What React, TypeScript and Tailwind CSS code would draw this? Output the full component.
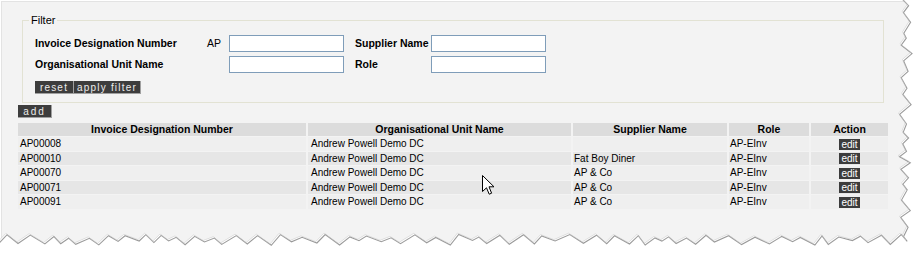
import { FC } from "react";

type Row = { id: string; unit: string; supplier: string; role: string };

const rows: Row[] = [
    { id: "AP00008", unit: "Andrew Powell Demo DC", supplier: "", role: "AP-EInv" },
    { id: "AP00010", unit: "Andrew Powell Demo DC", supplier: "Fat Boy Diner", role: "AP-EInv" },
    { id: "AP00070", unit: "Andrew Powell Demo DC", supplier: "AP & Co", role: "AP-EInv" },
    { id: "AP00071", unit: "Andrew Powell Demo DC", supplier: "AP & Co", role: "AP-EInv" },
    { id: "AP00091", unit: "Andrew Powell Demo DC", supplier: "AP & Co", role: "AP-EInv" },
];

// seeded random so the torn paper edge is the same on every render
const rand = (() => {
    let s = 1234567;
    return () => {
        s = (s * 16807) % 2147483647;
        return s / 2147483647;
    };
})();

const tornEdge = (() => {
    const pts: [number, number][] = [];
    let y = -2;
    let i = 0;
    while (y < 236) {
        const x = i % 2 === 0 ? 898 + rand() * 5 : 905 + rand() * 6;
        pts.push([x, y]);
        y += 5 + rand() * 6;
        i++;
    }
    pts.push([906, 240]);
    let x = 900;
    i = 0;
    while (x > -4) {
        const yy = i % 2 === 0 ? 233 + rand() * 4 : 239 + rand() * 5;
        pts.push([x, yy]);
        x -= 6 + rand() * 9;
        i++;
    }
    pts.push([-4, 238]);
    return pts;
})();

const edgeLine = tornEdge.map(([x, y]) => `${x.toFixed(1)},${y.toFixed(1)}`).join(" ");
const outside = `M921,-2 L${edgeLine} L-4,263 L921,263 Z`;

const DarkButton: FC<{ label: string; width: string }> = ({ label, width }) => (
    <span className={`${width} h-[13px] leading-[13px] inline-block text-center bg-[#3d3d3d] text-[#ececec] text-[10px] tracking-[1.2px] border-r border-b border-[#a0a0a0]`}>
        {label}
    </span>
);

const Field: FC = () => <div className="w-[115px] h-[17px] border border-[#7f9db9] bg-white" />;

const Cursor: FC = () => (
    <svg className="absolute left-[482px] top-[175px]" width="14" height="22" viewBox="0 0 14 22">
        <path d="M0.5 0.5 V16.5 L4.5 12.8 L7.2 19.2 L9.6 18.2 L7 11.8 H12 Z" fill="#fff" stroke="#000" strokeWidth="1" strokeLinejoin="miter" />
    </svg>
);

export default function App() {
    return (
        <div className="relative w-[921px] h-[263px] bg-white overflow-hidden text-black" style={{ fontFamily: '"Liberation Sans", Arial, sans-serif' }}>
            <div className="mt-[1px] ml-[1px] w-[912px] h-[252px] bg-[#f3f3f3] border-t border-l border-[#e3e3e3]">
                <div className="h-[231px] border-b border-[#e0e0e0]">
                    <fieldset className="ml-[20px] mt-[12px] w-[862px] border border-[#e2e2d3] pb-[8px]">
                        <legend className="ml-[6px] px-[2px] text-[11px] leading-[13px]">Filter</legend>
                        <div className="pl-[12px] pt-[8px] flex flex-col gap-[4px]">
                            <div className="flex items-center h-[17px]">
                                <span className="w-[172px] text-[10.5px] font-bold">Invoice Designation Number</span>
                                <span className="w-[22px] text-[10.5px]">AP</span>
                                <Field />
                                <span className="ml-[11px] w-[76px] text-[10.5px] font-bold">Supplier Name</span>
                                <Field />
                            </div>
                            <div className="flex items-center h-[17px]">
                                <span className="w-[172px] text-[10.5px] font-bold">Organisational Unit Name</span>
                                <span className="w-[22px]" />
                                <Field />
                                <span className="ml-[11px] w-[76px] text-[10.5px] font-bold">Role</span>
                                <Field />
                            </div>
                            <div className="flex mt-[4px]">
                                <DarkButton label="reset" width="w-[39px]" />
                                <DarkButton label="apply filter" width="w-[67px]" />
                            </div>
                        </div>
                    </fieldset>

                    <div className="ml-[16px] mt-[2px] flex">
                        <span className="w-[34px] h-[13px] leading-[13px] inline-block text-center bg-[#3d3d3d] text-[#ececec] text-[10px] tracking-[2px] border-r border-b border-[#a0a0a0]">
                            add
                        </span>
                    </div>

                    <table className="ml-[14px] mt-[4px] w-[874px] table-fixed border-separate border-spacing-x-[2px] border-spacing-y-[1px] text-[10px]">
                        <colgroup>
                            <col className="w-[288px]" />
                            <col className="w-[263px]" />
                            <col className="w-[154px]" />
                            <col className="w-[80px]" />
                            <col className="w-[77px]" />
                        </colgroup>
                        <thead>
                            <tr className="h-[13px] bg-[#dcdcdc] text-[10.5px] font-bold">
                                <th className="p-0 leading-[13px]">Invoice Designation Number</th>
                                <th className="p-0 leading-[13px]">Organisational Unit Name</th>
                                <th className="p-0 leading-[13px]">Supplier Name</th>
                                <th className="p-0 leading-[13px]">Role</th>
                                <th className="p-0 leading-[13px]">Action</th>
                            </tr>
                        </thead>
                        <tbody>
                            {rows.map((r, i) => (
                                <tr key={r.id} className={`h-[13.5px] ${i % 2 === 0 ? "bg-[#efefef]" : "bg-[#e6e6e6]"}`}>
                                    <td className="p-0 pl-[2px] leading-[13px]">{r.id}</td>
                                    <td className="p-0 pl-[3px] leading-[13px]">{r.unit}</td>
                                    <td className="p-0 pl-[1px] leading-[13px]">{r.supplier}</td>
                                    <td className="p-0 pl-[1px] leading-[13px]">{r.role}</td>
                                    <td className="p-0 text-center leading-[11px]">
                                        <span className="inline-block w-[21px] h-[11px] bg-[#3c3c3c] text-white text-[10px] leading-[11px] align-middle">edit</span>
                                    </td>
                                </tr>
                            ))}
                        </tbody>
                    </table>
                </div>
            </div>

            <Cursor />

            <svg className="absolute inset-0" width="921" height="263" viewBox="0 0 921 263">
                <defs>
                    <filter id="soft" x="-5%" y="-5%" width="110%" height="110%">
                        <feGaussianBlur stdDeviation="0.7" />
                    </filter>
                </defs>
                <path d={outside} fill="#ffffff" />
                <polyline points={edgeLine} fill="none" stroke="#4a4a4a" strokeWidth="1.1" opacity="0.55" transform="translate(1.2 1.4)" filter="url(#soft)" />
                <polyline points={edgeLine} fill="none" stroke="#c4c4c4" strokeWidth="0.5" />
            </svg>
        </div>
    );
}
